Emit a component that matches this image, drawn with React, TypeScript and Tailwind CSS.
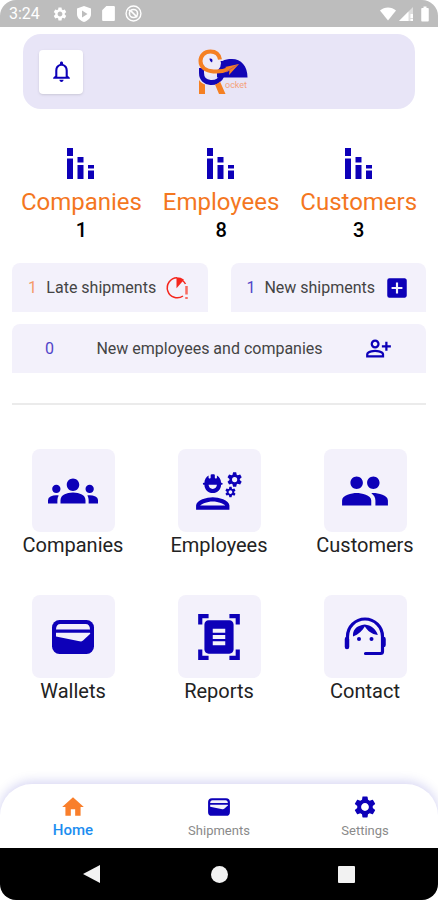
import type { ReactNode } from 'react';
import {
  MdAddBox,
  MdBatteryFull,
  MdDocumentScanner,
  MdGroup,
  MdGroups,
  MdHome,
  MdNotificationsNone,
  MdOutlineEngineering,
  MdOutlinePersonAddAlt,
  MdSettings,
} from 'react-icons/md';

const stats = [
  { label: 'Companies', value: 1 },
  { label: 'Employees', value: 8 },
  { label: 'Customers', value: 3 },
];

const tiles: { label: string; icon: ReactNode }[] = [
  { label: 'Companies', icon: <MdGroups className="size-[50px]" /> },
  { label: 'Employees', icon: <MdOutlineEngineering className="size-[50px]" /> },
  { label: 'Customers', icon: <MdGroup className="size-[50px]" /> },
  { label: 'Wallets', icon: <WalletIcon className="size-[50px]" /> },
  { label: 'Reports', icon: <MdDocumentScanner className="size-[50px]" /> },
  { label: 'Contact', icon: <ContactIcon className="size-[50px]" /> },
];

function BarsIcon() {
  return (
    <svg viewBox="0 0 28 32" className="h-8 w-7" fill="currentColor">
      <path d="M0 0h6v8H0zM0 10.500h6V31H0zM10.500 9h6v5.500h-6zM10.500 17h6v14h-6zM21 17h6v3.500h-6zM21 22.500h6V31h-6z" />
    </svg>
  );
}

function WalletIcon({ className }: { className: string }) {
  return (
    <svg viewBox="0 0 50 50" className={className} fill="none">
      <rect x="4" y="8" width="42" height="34" rx="7.500" fill="#0d00b8" />
      <path d="M8 17.500c0-3.500 1.500-5.500 4.500-5.500h25c3 0 4.500 2 4.500 5.500z" fill="#f3f1fb" />
      <path d="M8 20.800h33.500c.8 0 1 .6.500 1.200l-7 6.500c-1 .9-2 1.100-3.500.8L8 24.500z" fill="#f3f1fb" />
    </svg>
  );
}

function ContactIcon({ className }: { className: string }) {
  return (
    <svg viewBox="0 0 50 50" className={className} fill="none" stroke="currentColor">
      <path d="M7.500 26v-1.500a17 17 0 0 1 35 0V39.500a2 2 0 0 1-2 2H25.500" strokeWidth="3.200" strokeLinecap="round" />
      <path d="M7 27v8M43.500 27v6" strokeWidth="4.500" strokeLinecap="round" />
      <path d="M22 13C16 14.500 12.500 18 13 24.500 18.500 22.500 22.500 18.500 24.800 14.500c3 4.500 6.500 7.500 13 8.500C36 17 31 13.200 24.800 12.500z" fill="currentColor" stroke="none" />
      <circle cx="19" cy="27" r="2" fill="currentColor" stroke="none" />
      <circle cx="31.500" cy="27" r="2" fill="currentColor" stroke="none" />
    </svg>
  );
}

function LateIcon() {
  return (
    <svg viewBox="0 0 24 24" className="size-6 shrink-0" fill="none" stroke="#f5261d">
      <path d="M12 1.800a10 10 0 1 0 6 18.200M17.500 4.500A10 10 0 0 1 20.500 8" strokeWidth="1.500" />
      <path d="M11.500 1.200c3 0 5.500.8 7.500 2.500l-7.500 8.500z" fill="#f5261d" stroke="none" />
      <path d="M21.500 10v8.500M21.500 21v2" stroke="#f76b62" strokeWidth="2.500" />
    </svg>
  );
}

function Logo() {
  return (
    <svg viewBox="0 0 50 46" className="h-[46px] w-[50px]" fill="none">
      <path d="M19 28.500V12h5.500C27 10.500 30 10 34 10c9 0 15.500 7 15.500 18.500z" fill="#1206b5" />
      <path d="M3.500 19v5c0 12 17 12.500 20.500 2.500" stroke="#1206b5" strokeWidth="5" />
      <circle cx="13.500" cy="14" r="9.500" fill="#eeebf8" />
      <path d="M6 20.500c0 8 9 9.500 13 3z" fill="#eeebf8" />
      <path d="M22 10.500C21 5 17 2.500 12.500 2.500c-6 0-10 4-10 9.500 0 6.500 5.500 10 13 10.500 6.500.5 11-.5 15.500-2.500" stroke="#f58023" strokeWidth="4" />
      <path d="M27 18 41 15l-10 11 .5-4.500z" fill="#f58023" />
      <path d="M28 23 39 16" stroke="#b85a65" strokeWidth="1" />
      <path d="M11.500 9.500c3 0 3.500 1.500 2.500 4-1.500-.8-2.500-2-2.500-4z" fill="#1206b5" />
      <path d="M1 31c1.500 2 3.500 3.500 6 4.500V45H1zM17 35.500c2-.500 3.500-1.500 5-3l5.500 12.500H21z" fill="#f58023" />
      <text x="27" y="39" fontSize="9" fill="#f4a27a" fontFamily="Roboto, sans-serif">ocket</text>
    </svg>
  );
}

function StatusBar() {
  return (
    <div className="flex h-[27px] items-center justify-between rounded-t-2xl bg-[#bdbdbd] pr-1 pl-[9px] text-white">
      <div className="flex items-center">
        <span className="w-[43px] text-base">3:24</span>
        <MdSettings className="mr-2 size-4" />
        <svg viewBox="0 0 16 18" className="mr-2 h-[18px] w-4">
          <path d="M8 1l7 2.500V9c0 4-3 6.500-7 8-4-1.500-7-4-7-8V3.500z" fill="currentColor" />
          <path d="M6 5.500v7L11.500 9z" fill="#bdbdbd" />
        </svg>
        <svg viewBox="0 0 16 16" className="mr-2 size-[17px]">
          <path d="M6 1h7a1 1 0 0 1 1 1v12a1 1 0 0 1-1 1H3a1 1 0 0 1-1-1V5z" fill="currentColor" />
        </svg>
        <svg viewBox="0 0 16 16" className="size-[17px]" fill="none" stroke="currentColor">
          <circle cx="8" cy="8" r="7" strokeWidth="1.300" />
          <circle cx="8" cy="8" r="3.800" strokeWidth="1.500" />
          <path d="M5.500 5.500l6 6M3.500 5l2 .5" strokeWidth="1.500" />
        </svg>
      </div>
      <div className="flex items-center">
        <svg viewBox="0 0 16 14" className="h-[14px] w-4">
          <path d="M0 3.500C4.500-.500 11.500-.500 16 3.500L8 13.500z" fill="currentColor" />
        </svg>
        <svg viewBox="0 0 16 14" className="ml-0.5 h-[14px] w-4">
          <path d="M1 14 15 0v14z" fill="#dedede" />
          <path d="M1 14 10.500 4.500V14zM12.500 7H15v4h-2.500zM12.500 12H15v2h-2.500z" fill="currentColor" />
        </svg>
        <MdBatteryFull className="ml-0.5 size-[18px]" />
      </div>
    </div>
  );
}

export default function App() {
  return (
    <div className="flex min-h-screen flex-col overflow-hidden bg-white font-[Roboto,sans-serif] text-[#222]">
      <StatusBar />

      {/* header */}
      <header className="mx-[23px] mt-[7px] grid h-[75px] grid-cols-3 items-center rounded-[18px] bg-[#e8e5f7] px-4">
        <button aria-label="Notifications" className="flex size-11 items-center justify-center rounded bg-white text-[#0d00b8] shadow">
          <MdNotificationsNone className="size-[25px]" />
        </button>
        <div className="flex justify-center pl-2">
          <Logo />
        </div>
      </header>

      <main className="flex flex-1 flex-col px-3">
        {/* totals */}
        <section className="-mx-3 mt-[39px] flex justify-evenly">
          {stats.map(s => (
            <div key={s.label} className="flex flex-col items-center">
              <span className="text-[#0d00b8]"><BarsIcon /></span>
              <span className="mt-1.5 text-2xl leading-8 text-[#f4771f]">{s.label}</span>
              <span className="text-xl leading-6 font-medium text-black">{s.value}</span>
            </div>
          ))}
        </section>

        {/* pending items */}
        <section className="mt-[21px] grid grid-cols-2 gap-x-[23px] gap-y-3 text-[#444]">
          <button className="flex h-[49px] items-center justify-between rounded-t-lg bg-[#f3f1fb] pr-[18px] pl-4">
            <span className="text-[#f59a68]">1</span>
            <span>Late shipments</span>
            <LateIcon />
          </button>
          <button className="flex h-[49px] items-center justify-between rounded-t-lg bg-[#f3f1fb] pr-4 pl-4">
            <span className="text-[#5044c8]">1</span>
            <span>New shipments</span>
            <MdAddBox className="size-[26px] shrink-0 text-[#0d00b8]" />
          </button>
          <button className="col-span-2 flex h-[49px] items-center justify-between rounded-t-lg bg-[#f3f1fb] pr-[34px] pl-[33px]">
            <span className="text-[#5044c8]">0</span>
            <span>New employees and companies</span>
            <MdOutlinePersonAddAlt className="size-[27px] text-[#0d00b8]" />
          </button>
        </section>

        <hr className="mt-[30px] border-t-2 border-[#ebebeb]" />

        {/* menu */}
        <section className="-mx-3 mt-11 grid grid-cols-3 gap-y-[37px]">
          {tiles.map(t => (
            <button key={t.label} className="flex flex-col items-center text-xl">
              <span className="flex size-[83px] items-center justify-center rounded-lg bg-[#f3f1fb] text-[#0d00b8]">
                {t.icon}
              </span>
              <span className="leading-[26px]">{t.label}</span>
            </button>
          ))}
        </section>
      </main>

      {/* tab bar */}
      <nav className="grid h-16 grid-cols-3 rounded-t-[32px] bg-white pt-2.5 text-[13px] text-[#8a8a8a] shadow-[0_-2px_12px_rgba(13,0,184,0.18)]">
        <a href="#home" className="flex flex-col items-center font-medium text-[#1c8df0]">
          <MdHome className="size-[26px] text-[#f97f2b]" />
          <span className="text-[15px] leading-5">Home</span>
        </a>
        <a href="#shipments" className="flex flex-col items-center">
          <WalletIcon className="size-[26px]" />
          <span className="leading-[22px]">Shipments</span>
        </a>
        <a href="#settings" className="flex flex-col items-center">
          <MdSettings className="size-[26px] text-[#0d00b8]" />
          <span className="leading-[22px]">Settings</span>
        </a>
      </nav>

      {/* system buttons */}
      <div className="flex h-[52px] items-center justify-around rounded-b-2xl bg-black px-7 text-[#f2f2f2]">
        <button aria-label="Back">
          <svg viewBox="0 0 18 18" className="size-[18px]" fill="currentColor"><path d="M0 9 17 0v18z" /></svg>
        </button>
        <button aria-label="Home screen" className="size-[17px] rounded-full bg-[#f2f2f2]" />
        <button aria-label="Recent apps" className="size-[17px] rounded-[1px] bg-[#f2f2f2]" />
      </div>
    </div>
  );
}
